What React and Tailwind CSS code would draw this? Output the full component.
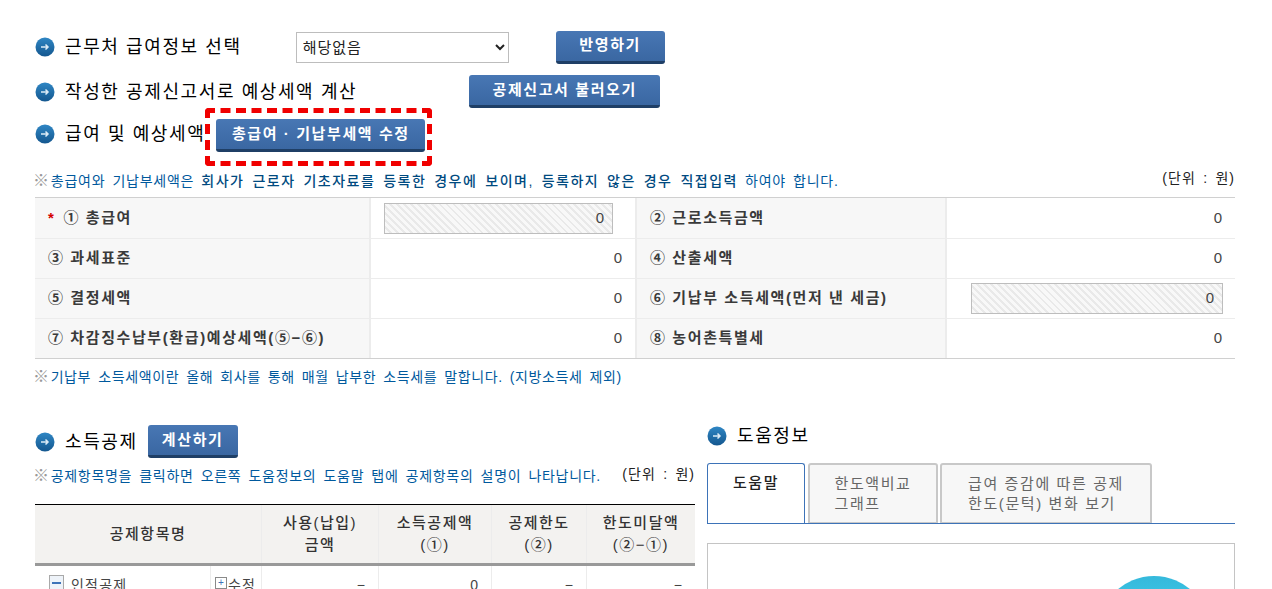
const FONT = "font-['Liberation_Sans','Noto_Sans_CJK_KR',sans-serif]";

function Bullet() {
  return (
    <svg width="20" height="20" viewBox="0 0 20 20" className="shrink-0">
      <defs>
        <linearGradient id="bulletFill" x1="0" y1="0" x2="0" y2="1">
          <stop offset="0" stopColor="#2f86c4" />
          <stop offset="1" stopColor="#14578f" />
        </linearGradient>
      </defs>
      <circle cx="10" cy="10" r="9.5" fill="url(#bulletFill)" />
      <path d="M6 10h7M10.5 7.5 13 10l-2.5 2.5" fill="none" stroke="#dcebf6" strokeWidth="1.5" />
    </svg>
  );
}

function Heading({ children, className = '' }) {
  return (
    <div className={`flex items-center shrink-0 ${className}`}>
      <Bullet />
      <span className="ml-[10px] text-[18px] leading-[24px] tracking-[1.6px] text-black whitespace-nowrap">{children}</span>
    </div>
  );
}

function BlueButton({ children, className }) {
  return (
    <button className={`h-[33px] rounded-[3px] border-b-[3px] border-[#1f3f66] bg-gradient-to-b from-[#4877b4] to-[#3a67a2] text-[15px] font-bold tracking-[1.6px] text-white whitespace-nowrap ${className}`}>
      {children}
    </button>
  );
}

function HatchInput({ className }) {
  return (
    <div className={`flex h-[31px] items-center justify-end border border-[#bdbdbd] bg-[repeating-linear-gradient(45deg,#f8f8f8_0px,#f8f8f8_3px,#e9e9e9_3px,#e9e9e9_5px)] pr-[8px] text-[15px] text-[#444] ${className}`}>
      0
    </div>
  );
}

function Mark() {
  return <span className="-ml-[2px] mr-[1px] text-[16px] leading-none text-[#9a9a9a]">※</span>;
}

const summaryRows = [
  [{ label: '① 총급여', required: true, input: true }, { label: '② 근로소득금액' }],
  [{ label: '③ 과세표준' }, { label: '④ 산출세액' }],
  [{ label: '⑤ 결정세액' }, { label: '⑥ 기납부 소득세액(먼저 낸 세금)', input: true }],
  [{ label: '⑦ 차감징수납부(환급)예상세액(⑤−⑥)' }, { label: '⑧ 농어촌특별세' }],
];

function SummaryTable() {
  return (
    <div className="mt-[3px] border-y border-[#d0d0d0]">
      {summaryRows.map((row, i) => (
        <div key={i} className={`grid h-[40px] grid-cols-[336px_264px_312px_288px] ${i > 0 ? 'border-t border-[#ececec]' : ''}`}>
          {row.map((cell, j) => (
            <div key={j} className="contents">
              <div className={`flex items-center border-[#ececec] bg-[#f7f7f7] pl-[13px] text-[15px] font-bold tracking-[1.6px] text-[#3a3a3a] whitespace-nowrap ${j === 0 ? 'border-r-2' : 'border-x-2'}`}>
                {cell.required && <span className="mr-[8px] text-[#d40000]">*</span>}
                <span>{cell.label}</span>
              </div>
              <div className="flex items-center justify-end pr-[12px] text-[15px] text-[#444]">
                {cell.input ? <HatchInput className={j === 0 ? 'mr-[10px] w-[229px]' : 'w-[252px]'} /> : <span className="mr-[1px]">0</span>}
              </div>
            </div>
          ))}
        </div>
      ))}
    </div>
  );
}

function Tab({ active, width, children }) {
  return (
    <div
      className={`flex h-[60px] items-start justify-center rounded-t-[3px] pt-[9px] text-[15px] leading-[20px] tracking-[1.6px] whitespace-nowrap ${width} ${
        active
          ? 'relative z-10 -mb-px border border-b-0 border-[#3d73b8] bg-white font-medium text-[#222]'
          : 'border-2 border-b border-[#c8c8c8] bg-[#f7f7f7] text-[#666]'
      }`}
    >
      {children}
    </div>
  );
}

function DeductionTable() {
  const th = 'flex items-center justify-center border-l border-[#ececec] text-center text-[15px] font-medium leading-[22px] tracking-[1.5px] text-[#333]';
  const num = 'flex items-start justify-end border-l border-[#ececec] pr-[13px] pt-[9px]';
  return (
    <div className="mt-[16px] border-t border-black">
      <div className="grid h-[61px] grid-cols-[226px_117px_113px_95px_109px] border-b-[3px] border-[#999] bg-[#f3f2f0]">
        <div className="flex items-center justify-center text-[15px] font-medium tracking-[1.5px] text-[#333]">공제항목명</div>
        <div className={th}>사용(납입)<br />금액</div>
        <div className={th}>소득공제액<br />(①)</div>
        <div className={th}>공제한도<br />(②)</div>
        <div className={th}>한도미달액<br />(②−①)</div>
      </div>
      <div className="grid h-[40px] grid-cols-[175px_51px_117px_113px_95px_109px] text-[14px] text-[#444]">
        <div className="flex items-start pl-[14px] pt-[9px]">
          <span className="mr-[7px] flex h-[15px] w-[15px] items-center justify-center border border-[#a9a9a9] bg-[#eef3f9]">
            <span className="h-[2px] w-[9px] bg-[#3d73b8]" />
          </span>
          <span className="tracking-[1.2px]">인적공제</span>
        </div>
        <div className="flex items-start overflow-hidden whitespace-nowrap border-l border-[#ececec] pl-[4px] pt-[9px]">
          <span className="mr-[1px] mt-[2px] flex h-[12px] w-[12px] shrink-0 items-center justify-center border border-[#8a8a8a] text-[10px] leading-none text-[#3d73b8]">+</span>
          <span className="tracking-[1px]">수정</span>
        </div>
        <div className={num}>−</div>
        <div className={num}>0</div>
        <div className={num}>−</div>
        <div className={num}>−</div>
      </div>
    </div>
  );
}

export default function App() {
  const unit = 'text-[14px] leading-[20px] tracking-[1px] [word-spacing:2.5px] text-[#222] whitespace-nowrap';
  const note = 'text-[14px] [word-spacing:2.5px] text-[#00599d] whitespace-nowrap';
  return (
    <div className={`${FONT} h-[589px] w-[1272px] overflow-hidden bg-white pl-[35px] pr-[37px] pt-[31px]`}>
      {/* top rows */}
      <div className="flex h-[32px] items-center">
        <Heading>근무처 급여정보 선택</Heading>
        <select defaultValue="none" className="ml-[54px] h-[31px] w-[213px] border border-[#bdbdbd] bg-white pl-[2px] text-[15px] tracking-[1px] text-[#222]">
          <option value="none">해당없음</option>
        </select>
        <BlueButton className="ml-[47px] w-[109px]">반영하기</BlueButton>
      </div>
      <div className="mt-[12px] flex h-[33px] items-center">
        <Heading>작성한 공제신고서로 예상세액 계산</Heading>
        <BlueButton className="ml-[112px] w-[191px]">공제신고서 불러오기</BlueButton>
      </div>
      <div className="flex items-center">
        <Heading className="mb-[6px]">급여 및 예상세액</Heading>
        <div className="rounded-[4px] border-[5px] border-dashed border-[#f00000] pb-[9px] pl-[6px] pr-[2px] pt-[6px]">
          <BlueButton className="block w-[209px]">총급여 · 기납부세액 수정</BlueButton>
        </div>
      </div>

      <div className="mt-[2px] flex items-start justify-between">
        <p className={`${note} leading-[26px] tracking-[0.75px]`}>
          <Mark />총급여와 기납부세액은{' '}
          <span className="font-medium tracking-[1.5px] text-[#004a80]">회사가 근로자 기초자료를 등록한 경우에 보이며, 등록하지 않은 경우 직접입력</span> 하여야 합니다.
        </p>
        <span className={unit}>(단위 : 원)</span>
      </div>

      <SummaryTable />

      <p className={`${note} mt-[7px] leading-[22px] tracking-[0.62px]`}>
        <Mark />기납부 소득세액이란 올해 회사를 통해 매월 납부한 소득세를 말합니다. (지방소득세 제외)
      </p>

      <div className="mt-[35px] flex items-start gap-[12px]">
        <div className="w-[660px] pt-[2px]">
          <div className="flex items-center">
            <Heading>소득공제</Heading>
            <BlueButton className="ml-[10px] w-[90px]">계산하기</BlueButton>
          </div>
          <div className="mt-[6px] flex items-start justify-between">
            <p className={`${note} leading-[24px] tracking-[0.7px]`}>
              <Mark />공제항목명을 클릭하면 오른쪽 도움정보의 도움말 탭에 공제항목의 설명이 나타납니다.
            </p>
            <span className={unit}>(단위 : 원)</span>
          </div>
          <DeductionTable />
        </div>

        <div className="w-[528px] pt-[1px]">
          <div className="flex h-[24px] items-center">
            <Heading>도움정보</Heading>
          </div>
          <div className="mt-[15px] flex border-b border-[#3d73b8]">
            <Tab active width="w-[98px]">도움말</Tab>
            <div className="ml-[3px]">
              <Tab width="w-[130px]"><span>한도액비교<br />그래프</span></Tab>
            </div>
            <div className="ml-[2px]">
              <Tab width="w-[212px]"><span>급여 증감에 따른 공제<br />한도(문턱) 변화 보기</span></Tab>
            </div>
          </div>
          <div className="mt-[19px] flex h-[200px] justify-end border border-[#c4c4c4] pr-[24px] pt-[32px]">
            <div className="h-[112px] w-[112px] rounded-full bg-gradient-to-b from-[#35b9dc] to-[#52e8f8]" />
          </div>
        </div>
      </div>
    </div>
  );
}
